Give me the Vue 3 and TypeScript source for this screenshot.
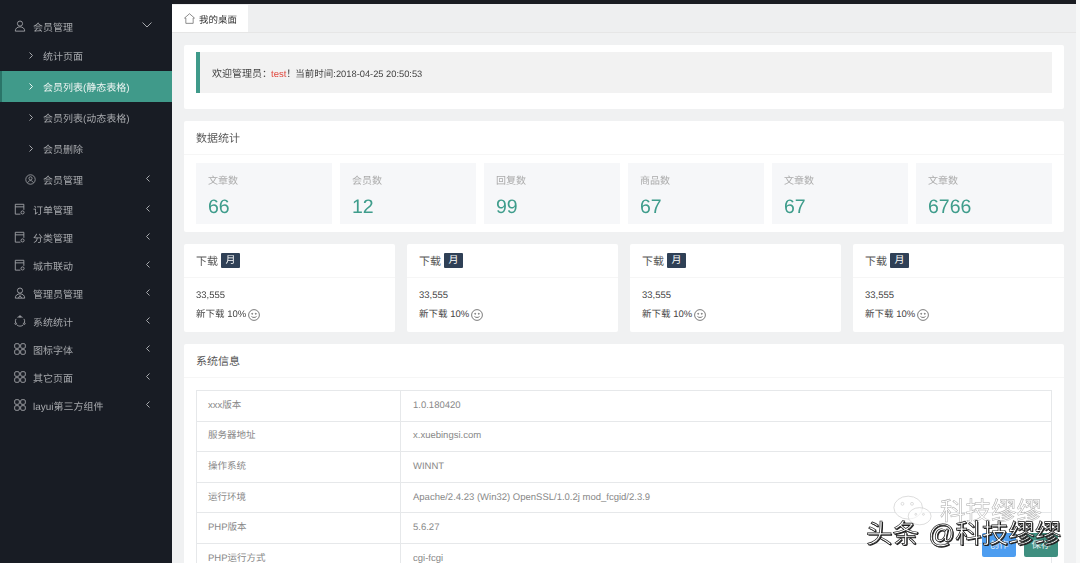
<script setup lang="ts">
interface SideItem { label: string; icon: string }
const subItems = [
  { label: '统计页面', active: false },
  { label: '会员列表(静态表格)', active: true },
  { label: '会员列表(动态表格)', active: false },
  { label: '会员删除', active: false },
]
const groups: SideItem[] = [
  { label: '订单管理', icon: 'doc' },
  { label: '分类管理', icon: 'doc' },
  { label: '城市联动', icon: 'doc' },
  { label: '管理员管理', icon: 'admin' },
  { label: '系统统计', icon: 'cycle' },
  { label: '图标字体', icon: 'grid' },
  { label: '其它页面', icon: 'grid' },
  { label: 'layui第三方组件', icon: 'grid' },
]
const stats = [
  { label: '文章数', value: '66' },
  { label: '会员数', value: '12' },
  { label: '回复数', value: '99' },
  { label: '商品数', value: '67' },
  { label: '文章数', value: '67' },
  { label: '文章数', value: '6766' },
]
const rows = [
  ['xxx版本', '1.0.180420'],
  ['服务器地址', 'x.xuebingsi.com'],
  ['操作系统', 'WINNT'],
  ['运行环境', 'Apache/2.4.23 (Win32) OpenSSL/1.0.2j mod_fcgid/2.3.9'],
  ['PHP版本', '5.6.27'],
  ['PHP运行方式', 'cgi-fcgi'],
]
</script>

<template>
  <div class="app">
    <div class="shot">
      <aside class="side">
        <div class="group head-group">
          <svg class="ic" viewBox="0 0 14 14"><circle cx="7" cy="4.2" r="3" /><path d="M1.5 13c0-3.2 2.4-5 5.5-5s5.5 1.8 5.5 5z" /></svg>
          <span class="g-label">会员管理</span>
          <svg class="down" viewBox="0 0 10 6"><path d="M.5.5L5 5 9.500.5" /></svg>
        </div>
        <div v-for="s in subItems" :key="s.label" class="sub" :class="{ active: s.active }">
          <svg class="chev-r" viewBox="0 0 4 7"><path d="M.5.5l3 3-3 3" /></svg>
          <span>{{ s.label }}</span>
        </div>
        <div class="sub sub-icon">
          <svg class="ic-sm" viewBox="0 0 14 14"><circle cx="7" cy="7" r="6" /><circle cx="7" cy="5.500" r="2" /><path d="M3.500 11c.6-1.800 2-2.600 3.500-2.600s2.900.8 3.500 2.600" /></svg>
          <span>会员管理</span>
          <svg class="chev-l" viewBox="0 0 4 7"><path d="M3.500.5l-3 3 3 3" /></svg>
        </div>
        <div v-for="g in groups" :key="g.label" class="group">
          <svg v-if="g.icon === 'doc'" class="ic" viewBox="0 0 14 14"><path d="M7.500 13H1.500V1.500h10V8M1.500 4.500h10" /><circle cx="10" cy="11" r="1.800" /></svg>
          <svg v-else-if="g.icon === 'admin'" class="ic" viewBox="0 0 14 14"><circle cx="7" cy="4.200" r="3" /><path d="M1.500 13c0-3.200 2.400-5 5.500-5s5.500 1.800 5.500 5zM5 13l2-3 2 3" /></svg>
          <svg v-else-if="g.icon === 'cycle'" class="ic" viewBox="0 0 14 14"><path d="M4 2.800a5.500 5.500 0 0 1 6 0M1.800 9a5.500 5.500 0 0 1 .6-4.500M12.200 9a5.500 5.500 0 0 0-.6-4.500M3.200 11.500a5.500 5.500 0 0 0 7.600 0" /><circle cx="7" cy="1.800" r="1" /><circle cx="2" cy="10" r="1" /><circle cx="12" cy="10" r="1" /></svg>
          <svg v-else class="ic" viewBox="0 0 14 14"><rect x=".8" y=".8" width="5.400" height="5.400" rx="1.500" /><rect x="7.800" y=".8" width="5.400" height="5.400" rx="1.500" /><rect x=".8" y="7.800" width="5.400" height="5.400" rx="1.500" /><rect x="7.800" y="7.800" width="5.400" height="5.400" rx="1.500" /></svg>
          <span class="g-label">{{ g.label }}</span>
          <svg class="chev-l" viewBox="0 0 4 7"><path d="M3.500.5l-3 3 3 3" /></svg>
        </div>
      </aside>

      <main class="main">
        <div class="tabs">
          <div class="tab">
            <svg class="home" viewBox="0 0 12 12"><path d="M.6 5.500L6 .8l5.400 4.700-1.400 0V11.300H2V5.500z" /></svg>
            <span>我的桌面</span>
          </div>
        </div>
        <div class="content">
          <section class="card welcome-card">
            <div class="quote"><span>欢迎管理员：<em>test</em>！<span class="now">当前时间:</span><span class="time">2018-04-25 20:50:53</span></span></div>
          </section>

          <section class="card">
            <h3 class="card-h">数据统计</h3>
            <div class="stats">
              <div v-for="(s, i) in stats" :key="i" class="stat">
                <div class="stat-l">{{ s.label }}</div>
                <div class="stat-v">{{ s.value }}</div>
              </div>
            </div>
          </section>

          <div class="dl-row">
            <section v-for="n in 4" :key="n" class="card dl">
              <h3 class="card-h">下载<span class="badge">月</span></h3>
              <div class="dl-body">
                <div>33,555</div>
                <div class="dl-line">新下载 10%
                  <svg class="smile" viewBox="0 0 12 12"><circle cx="6" cy="6" r="5.400" /><circle cx="4.200" cy="4.800" r=".5" /><circle cx="7.800" cy="4.800" r=".5" /><path d="M3.500 7.500c1.200 1.300 3.800 1.300 5 0" /></svg>
                </div>
              </div>
            </section>
          </div>

          <section class="card">
            <h3 class="card-h">系统信息</h3>
            <div class="table-wrap">
              <table class="info">
                <tbody>
                  <tr v-for="r in rows" :key="r[0]">
                    <td class="k">{{ r[0] }}</td>
                    <td>{{ r[1] }}</td>
                  </tr>
                </tbody>
              </table>
            </div>
          </section>
        </div>
      </main>

      <div class="float-btns">
        <span class="fbtn blue">创作</span>
        <span class="fbtn green">保存</span>
      </div>
      <div class="wm">
        <svg class="wm-ic" viewBox="0 0 44 34"><ellipse cx="18" cy="14" rx="15" ry="12" /><ellipse cx="30" cy="23" rx="12" ry="9" /><circle cx="12" cy="10" r="1.500" /><circle cx="22" cy="10" r="1.500" /><circle cx="26" cy="21" r="1" /><circle cx="34" cy="21" r="1" /></svg>
        <span class="wm-a">科技缪缪</span>
        <span class="wm-b">头条 @科技缪缪</span>
      </div>
    </div>
  </div>
</template>

<style>
html, body { margin: 0; height: 100%; overflow: hidden; background: #f7f8f8; }
</style>

<style scoped>
.app {
  width: 1080px;
  height: 563px;
  overflow: hidden;
  background: #f7f8f8;
  font-family: "Liberation Sans", "Noto Sans CJK SC", sans-serif;
  font-size: 10px;
  color: #555;
  text-rendering: geometricPrecision;
}
.shot {
  position: relative;
  width: 1076px;
  height: 563px;
  display: flex;
  background: #f0f1f2;
  filter: blur(.3px);
}
.side {
  width: 172px;
  flex: none;
  background: #181c24;
  color: #a7a9ad;
  padding-top: 11px;
  box-sizing: border-box;
}
.group {
  height: 28px;
  display: flex;
  align-items: center;
  padding-left: 14px;
  position: relative;
}
.head-group { height: 30px; margin-bottom: -1px; }
.g-label { margin-left: 6px; font-size: 10px; }
.ic { width: 12px; height: 12px; margin-right: 1px; fill: none; stroke: #a7a9ad; stroke-width: 1; }
.ic-sm { width: 11px; height: 11px; fill: none; stroke: #a7a9ad; stroke-width: 1; margin-right: 7px; }
.down { position: absolute; left: 142px; top: 11px; width: 10px; height: 6px; fill: none; stroke: #a7a9ad; stroke-width: 1; }
.sub {
  height: 31px;
  display: flex;
  align-items: center;
  padding-left: 29px;
  position: relative;
  box-sizing: border-box;
}
.sub.active {
  background: #409a8a;
  color: #eef5f3;
  border-left: 2px solid #2a7468;
  padding-left: 27px;
}
.sub-icon { padding-left: 25px; height: 30px; margin-bottom: 1px; }
.chev-r { width: 4px; height: 7px; fill: none; stroke: currentColor; stroke-width: 1; margin-right: 10px; }
.chev-l { position: absolute; left: 146px; top: 50%; margin-top: -4px; width: 4px; height: 7px; fill: none; stroke: #a7a9ad; stroke-width: 1; }

.main { flex: 1; min-width: 0; display: flex; flex-direction: column; border-top: 4px solid #1a1c22; }
.tabs {
  height: 29px;
  flex: none;
  background: #eeeff0;
  border-bottom: 1px solid #e6e6e6;
  box-sizing: border-box;
  padding-top: 1px;
}
.tab {
  width: 76px;
  height: 27px;
  background: #fff;
  display: flex;
  align-items: center;
  padding-left: 12px;
  box-sizing: border-box;
  color: #333;
  font-size: 9.500px;
}
.home { width: 11px; height: 11px; fill: none; stroke: #666; stroke-width: .8; margin-right: 4px; }
.content {
  padding: 12px 12px 0;
  display: flex;
  flex-direction: column;
  gap: 12px;
}
.card { background: #fff; border-radius: 2px; }
.welcome-card { padding: 7px 12px 0; height: 64px; box-sizing: border-box; }
.quote {
  height: 41px;
  background: #f2f2f2;
  border-left: 4px solid #3f9a8a;
  padding-left: 12px;
  display: flex;
  align-items: center;
  color: #444;
}
.quote em { font-style: normal; color: #e0493f; font-size: 9.500px; margin: 0 0 0 -1px; }
.now { font-size: 9.500px; margin-left: -1px; }
.time { font-size: 9.300px; }
.card-h {
  margin: 0;
  height: 34px;
  padding-left: 12px;
  font-size: 11px;
  font-weight: 400;
  color: #555;
  border-bottom: 1px solid #f6f6f6;
  box-sizing: border-box;
  display: flex;
  align-items: center;
}
.stats {
  display: grid;
  grid-template-columns: repeat(6, 1fr);
  gap: 8px;
  padding: 8px 12px;
}
.stat { background: #f6f7f9; height: 61px; padding: 13px 12px 0; box-sizing: border-box; }
.stat-l { color: #aaa; font-size: 10px; line-height: 12px; }
.stat-v { color: #3f9d8c; font-size: 19.500px; line-height: 24px; margin-top: 7px; }
.dl-row { display: grid; grid-template-columns: repeat(4, 1fr); gap: 12px; }
.dl { height: 88px; }
.badge {
  background: #2f4056;
  color: #fff;
  font-size: 10px;
  line-height: 15px;
  width: 19px;
  text-align: center;
  margin-left: 3px;
  border-radius: 1px;
}
.dl-body { padding: 8px 12px 0; color: #444; font-size: 9.500px; line-height: 19px; }
.dl-line { display: flex; align-items: center; gap: 2px; }
.smile { width: 12px; height: 12px; fill: none; stroke: #444; stroke-width: .7; }
.table-wrap { padding: 12px 12px 0; }
.info { width: 100%; border-collapse: collapse; table-layout: fixed; color: #888; font-size: 9.500px; line-height: 12px; }
.info td { height: 30.600px; padding: 0 12px; border: 1px solid #e6e8ea; box-sizing: border-box; }
.info td.k { width: 204px; padding-left: 11px; }

.float-btns { position: absolute; left: 982px; top: 533px; display: flex; gap: 8px; }
.fbtn { width: 34px; height: 24px; border-radius: 2px; color: #e6f0f5; text-align: center; line-height: 26px; font-size: 9.500px; }
.blue { background: #4d9df0; }
.green { background: #3f8f80; }
.wm { position: absolute; inset: 0; pointer-events: none; }
.wm-ic { position: absolute; left: 891px; top: 494px; width: 42px; height: 33px; fill: rgba(255,255,255,.6); stroke: #ccc; stroke-width: .7; }
.wm-a { position: absolute; left: 940px; top: 497px; font-size: 25.500px; line-height: 30px; color: #fff; -webkit-text-stroke: .5px #aaa; white-space: nowrap; }
.wm-b {
  position: absolute;
  left: 866px;
  top: 517px;
  font-size: 26.500px;
  line-height: 34px;
  word-spacing: 2px;
  white-space: nowrap;
  color: #fff;
  -webkit-text-stroke: .7px #111;
  text-shadow: 1px 1px 0 #222;
}
</style>
